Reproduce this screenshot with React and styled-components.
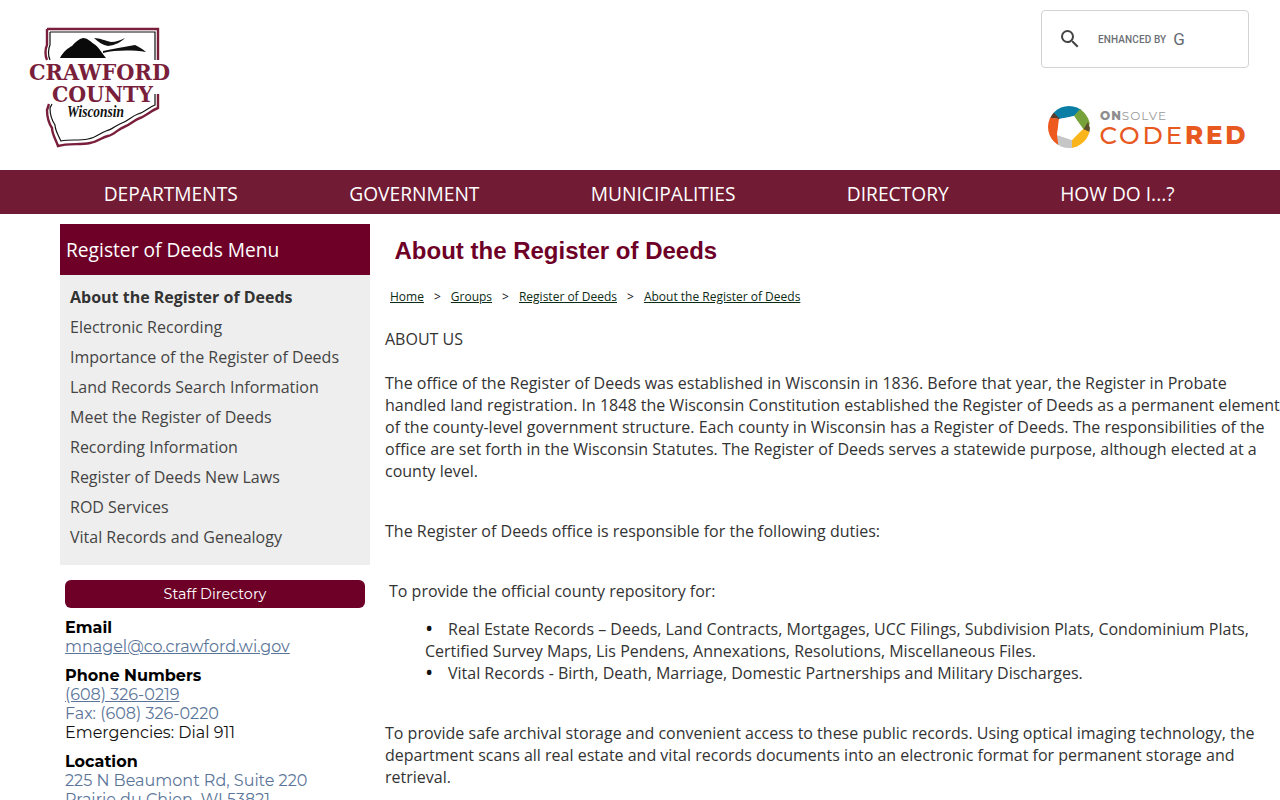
import React from "react";
import styled, { createGlobalStyle } from "styled-components";

const Global = createGlobalStyle`
  html, body { margin: 0; padding: 0; height: 800px; overflow: hidden; background: #fff; }
  body { font-family: "Open Sans", sans-serif; color: #333; font-size: 16px; }
  * { box-sizing: border-box; }
`;
const Page = styled.div`width: 1280px; height: 800px; overflow: hidden;`;
const Header = styled.header`height: 170px; display: flex; justify-content: space-between; padding: 10px 31px 0 25px;`;
const LogoBox = styled.div`padding-top: 15px; line-height: 0;`;
const HeaderRight = styled.div`display: flex; flex-direction: column; align-items: flex-end;`;
const SearchBox = styled.div`
  width: 208px; height: 58px; border: 1px solid #d3d3d3; border-radius: 4px;
  display: flex; align-items: center; padding-left: 16px;
`;
const Enhanced = styled.span`
  font-family: "Roboto", sans-serif; font-size: 10px; font-weight: 500; color: #6b6f75;
  margin-left: 16px; letter-spacing: 0.12px;
`;
const GLetter = styled.span`
  font-family: "Roboto", sans-serif; font-size: 17px; font-weight: 400; color: #666a70; margin-left: 7px;
`;
const CodeRedBox = styled.div`margin: 38px 1px 0 0; line-height: 0;`;
const Nav = styled.nav`height: 44px; background: #721b34; display: flex; align-items: center; padding: 3px 0 0 48px;`;
const NavItem = styled.a`
  font-size: 19.2px; line-height: 41px; color: #fff; padding: 0 55.7px; white-space: nowrap;
`;
const Main = styled.div`display: flex; padding: 10px 0 0 60px;`;
const Side = styled.aside`width: 310px; flex: none;`;
const MenuTitle = styled.div`
  height: 51px; background: #6e0027; color: #fff; font-size: 19.2px; line-height: 52px; padding-left: 6px;
`;
const Menu = styled.ul`
  list-style: none; margin: 0; padding: 7px 0 13px 10px; background: #eee;
`;
const MenuItem = styled.li`
  height: 30px; line-height: 30px; font-size: 16px; color: ${p => (p.$active ? "#333" : "#444")};
  font-weight: ${p => (p.$active ? 700 : 400)};
`;
const Staff = styled.div`padding: 15px 5px 0; font-family: "Montserrat", "Inter", sans-serif; font-size: 16px; line-height: 19px; color: #111;`;
const StaffButton = styled.div`
  height: 28px; border-radius: 6px; background: #6e0027; color: #fff; text-align: center;
  font-size: 14.4px; line-height: 28px; margin-bottom: 10px;
`;
const Block = styled.div`margin-bottom: 10px;`;
const Label = styled.div`font-weight: 700; color: #000;`;
const SideLink = styled.div`color: #5b7599; ${p => p.$u && "text-decoration: underline;"}`;
const Content = styled.main`width: 910px; flex: none; padding-left: 15px;`;
const Title = styled.h1`
  margin: 0; padding: 14px 0 0 9.5px; height: 58px; font: 700 24px/26px "Liberation Sans", sans-serif; color: #6e0027;
`;
const Crumbs = styled.div`display: flex; padding: 6px 0 0 5px; font-size: 12px; line-height: 18px; height: 46px; color: #111;`;
const Crumb = styled.a`color: #0d2b14; text-decoration: underline;`;
const Sep = styled.span`margin: 0 10px;`;
const Para = styled.p`margin: 0 0 ${p => p.$mb || 0}px; font-size: 16px; line-height: 22px; color: #333; padding-left: ${p => p.$pl || 0}px; white-space: pre-line;`;
const List = styled.ul`list-style: none; margin: 0 0 38px; padding: 0 0 0 40px; font-size: 16px; line-height: 22px;`;
const Li = styled.li`
  &::before { content: "•"; display: inline-block; width: 23px; color: #111; font-size: 22px; line-height: 18px; vertical-align: -1px; }
`;

const maroon = "#7a1f3b";

const Logo = () => (
  <svg width="150" height="130" viewBox="25 25 150 130" overflow="visible">
    <path d="M47 29 L158 29 L158 60 M158 94 L158 108 C152 110 146 116 140 118 C134 120 130 125 124 127 C118 129 114 135 108 136 C102 137 98 142 90 143 C80 145 68 143 58 146 C56 140 52 134 52 128 C48 122 47 116 47 110 L49 104 M47 29 L47 45 C45 49 45 56 47 60"
      fill="none" stroke={maroon} strokeWidth="2.4" />
    <path d="M50 32 L155 32 L155 60 M155 94 L155 105 C149 107 144 113 138 114 C132 116 128 121 122 123 C116 125 112 130 106 131 C100 133 96 138 88 139 C78 141 70 139 61 141 C58 135 55 130 55 125 C51 119 50 113 50 108 L52 104 M50 32 L50 45 C48 49 48 56 50 60"
      fill="none" stroke="#111" strokeWidth="1.2" />
    <path d="M60 58 C63 52 68 48 72 46 C75 42 79 39 83 38 C87 38 90 41 94 44 C98 46 101 52 106 58 Z" fill="#0a0a0a" />
    <path d="M94 38 C100 38 106 41 111 42 C116 42 121 40 125 38 C121 42 116 45 108 46 C103 45 98 42 94 38 Z" fill="#111" />
    <path d="M103 51 C112 49 124 47 135 45 C139 47 143 49 146 52 C132 50 116 50 103 53 Z" fill="#111" />
    <text x="99.5" y="80" textAnchor="middle" textLength="141" lengthAdjust="spacingAndGlyphs" fontFamily="'DejaVu Serif', serif" fontWeight="700" fontSize="23" fill={maroon}>CRAWFORD</text>
    <text x="102.5" y="102" textAnchor="middle" textLength="101" lengthAdjust="spacingAndGlyphs" fontFamily="'DejaVu Serif', serif" fontWeight="700" fontSize="23" fill={maroon}>COUNTY</text>
    <text x="95.5" y="117" textAnchor="middle" textLength="57" lengthAdjust="spacingAndGlyphs" fontFamily="'Liberation Serif', serif" fontStyle="italic" fontWeight="700" fontSize="16" fill="#111">Wisconsin</text>
  </svg>
);

const CodeRed = () => (
  <svg width="200" height="44" viewBox="0 0 200 44" overflow="visible">
    <defs><clipPath id="c"><circle cx="21" cy="21" r="21" /></clipPath></defs>
    <g clipPath="url(#c)">
      <path d="M5 9 L11 13 L26 10 L34 3 L30 -2 L8 -2 Z" fill="#0a7ea4" />
      <path d="M0 12 L5 6 L12 13 Z" fill="#5a3a28" />
      <path d="M26 10 L33 2 L44 16 L36 24 Z" fill="#77a23a" />
      <path d="M35 24 L40 16 L44 28 Z" fill="#5c4f2a" />
      <path d="M35 23 L44 27 L32 44 L22 44 L24 34 Z" fill="#fbb51c" />
      <path d="M24 34 L9 29 L8 44 L24 44 Z" fill="#c6c6c6" />
      <path d="M-2 11 L11 13 L9 29 L11 44 L-2 44 Z" fill="#ee5a1e" />
      <path d="M11 13 Q18 13 26 10 Q30 17 35 23 Q29 27 24 34 Q16 31 9 29 Q11 21 11 13 Z" fill="#fff" />
    </g>
    <text x="52" y="14" fontFamily="'Montserrat', sans-serif" fontSize="12" fill="#9a9a9a" letterSpacing="1"><tspan fontWeight="800" fill="#8d8d8d">ON</tspan>SOLVE</text>
    <text x="51.5" y="38" fontFamily="'Montserrat', sans-serif" fontWeight="500" fontSize="24.5" fill="#e8591f" letterSpacing="2.9">CODE<tspan fontWeight="800">RED</tspan></text>
  </svg>
);

const SearchIcon = () => (
  <svg width="24" height="24" viewBox="0 0 24 24" fill="#444">
    <path d="M15.5 14h-.79l-.28-.27A6.47 6.47 0 0 0 16 9.5 6.5 6.5 0 1 0 9.5 16c1.61 0 3.09-.59 4.23-1.57l.27.28v.79l5 4.99L20.49 19l-4.99-5zm-6 0C7.01 14 5 11.99 5 9.5S7.01 5 9.5 5 14 7.01 14 9.5 11.99 14 9.5 14z" />
  </svg>
);

const navs = ["DEPARTMENTS", "GOVERNMENT", "MUNICIPALITIES", "DIRECTORY", "HOW DO I...?"];
const menu = ["About the Register of Deeds", "Electronic Recording", "Importance of the Register of Deeds", "Land Records Search Information", "Meet the Register of Deeds", "Recording Information", "Register of Deeds New Laws", "ROD Services", "Vital Records and Genealogy"];
const crumbs = ["Home", "Groups", "Register of Deeds", "About the Register of Deeds"];

export default function App() {
  return (
    <Page>
      <Global />
      <Header>
        <LogoBox><Logo /></LogoBox>
        <HeaderRight>
          <SearchBox>
            <SearchIcon />
            <Enhanced>ENHANCED BY</Enhanced>
            <GLetter>G</GLetter>
          </SearchBox>
          <CodeRedBox><CodeRed /></CodeRedBox>
        </HeaderRight>
      </Header>
      <Nav>{navs.map(n => <NavItem key={n}>{n}</NavItem>)}</Nav>
      <Main>
        <Side>
          <MenuTitle>Register of Deeds Menu</MenuTitle>
          <Menu>{menu.map((m, i) => <MenuItem key={m} $active={i === 0}>{m}</MenuItem>)}</Menu>
          <Staff>
            <StaffButton>Staff Directory</StaffButton>
            <Block>
              <Label>Email</Label>
              <SideLink $u>mnagel@co.crawford.wi.gov</SideLink>
            </Block>
            <Block>
              <Label>Phone Numbers</Label>
              <SideLink $u>(608) 326-0219</SideLink>
              <SideLink>Fax: (608) 326-0220</SideLink>
              <div>Emergencies: Dial 911</div>
            </Block>
            <Block>
              <Label>Location</Label>
              <SideLink>225 N Beaumont Rd, Suite 220</SideLink>
              <SideLink>Prairie du Chien, WI 53821</SideLink>
            </Block>
          </Staff>
        </Side>
        <Content>
          <Title>About the Register of Deeds</Title>
          <Crumbs>
            {crumbs.map((c, i) => (
              <React.Fragment key={c}>
                {i > 0 && <Sep>&gt;</Sep>}
                <Crumb>{c}</Crumb>
              </React.Fragment>
            ))}
          </Crumbs>
          <Para $mb={22}>ABOUT US</Para>
          <Para $mb={38}>{`The office of the Register of Deeds was established in Wisconsin in 1836. Before that year, the Register in Probate
handled land registration. In 1848 the Wisconsin Constitution established the Register of Deeds as a permanent element
of the county-level government structure. Each county in Wisconsin has a Register of Deeds. The responsibilities of the
office are set forth in the Wisconsin Statutes. The Register of Deeds serves a statewide purpose, although elected at a
county level.`}</Para>
          <Para $mb={38}>The Register of Deeds office is responsible for the following duties:</Para>
          <Para $mb={16} $pl={4}>To provide the official county repository for:</Para>
          <List>
            <Li>Real Estate Records – Deeds, Land Contracts, Mortgages, UCC Filings, Subdivision Plats, Condominium Plats,<br />Certified Survey Maps, Lis Pendens, Annexations, Resolutions, Miscellaneous Files.</Li>
            <Li>Vital Records - Birth, Death, Marriage, Domestic Partnerships and Military Discharges.</Li>
          </List>
          <Para>{`To provide safe archival storage and convenient access to these public records. Using optical imaging technology, the
department scans all real estate and vital records documents into an electronic format for permanent storage and
retrieval.`}</Para>
        </Content>
      </Main>
    </Page>
  );
}
